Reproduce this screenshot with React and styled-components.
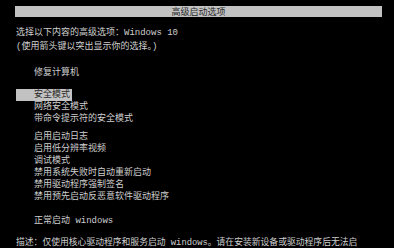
import React from "react";
import styled, { createGlobalStyle } from "styled-components";

const GlobalStyle = createGlobalStyle`
    body{
        margin:0;
        background-color:#000;
    }
`;

const grupos = [
    { top: 14, itens: ["修复计算机"] },
    { top: 10, itens: ["安全模式", "网络安全模式", "带命令提示符的安全模式"], selecionado: 0 },
    { top: 6, itens: ["启用启动日志", "启用低分辨率视频", "调试模式", "禁用系统失败时自动重新启动", "禁用驱动程序强制签名", "禁用预先启动反恶意软件驱动程序"] },
    { top: 12, itens: ["正常启动 windows"] },
];

export default function App() {
    return (
        <>
            <GlobalStyle />
            <Tela>
                <BarraTitulo>高级启动选项</BarraTitulo>
                <Linha $mt={10}>选择以下内容的高级选项：Windows 10</Linha>
                <Linha $mt={2}>(使用箭头键以突出显示你的选择。)</Linha>
                {grupos.map((g, i) => (
                    <Grupo key={i} $mt={g.top}>
                        {g.itens.map((item, j) => (
                            <Opcao key={item} $ativo={g.selecionado === j}>{item}</Opcao>
                        ))}
                    </Grupo>
                ))}
                <Linha $mt={10} $pequena>描述：仅使用核心驱动程序和服务启动 windows。请在安装新设备或驱动程序后无法启</Linha>
            </Tela>
        </>
    );
}

const Tela = styled.div`
    width:394px;
    height:248px;
    box-sizing:border-box;
    padding-top:6px;
    background-color:#000;
    overflow:hidden;
    display:flex;
    flex-direction:column;
    font-family:"Liberation Mono", "Noto Sans CJK SC", monospace;
    font-size:9px;
    line-height:12px;
    color:#cfcfcf;
    white-space:nowrap;
`;

const BarraTitulo = styled.div`
    margin-left:15px;
    width:367px;
    height:11px;
    line-height:11px;
    background-color:#c2c2c2;
    color:#2a2a2a;
    text-align:center;
    font-family:"Noto Sans CJK SC", sans-serif;
`;

const Linha = styled.div`
    margin-top:${(p) => p.$mt}px;
    padding-left:16px;
    font-size:${(p) => (p.$pequena ? "8.8px" : "9px")};
`;

const Grupo = styled.div`
    margin-top:${(p) => p.$mt}px;
    display:flex;
    flex-direction:column;
    align-items:flex-start;
`;

const Opcao = styled.div`
    margin-left:16px;
    padding:0 2px 0 18px;
    height:12px;
    background-color:${(p) => (p.$ativo ? "#c2c2c2" : "transparent")};
    color:${(p) => (p.$ativo ? "#2a2a2a" : "#cfcfcf")};
`;
